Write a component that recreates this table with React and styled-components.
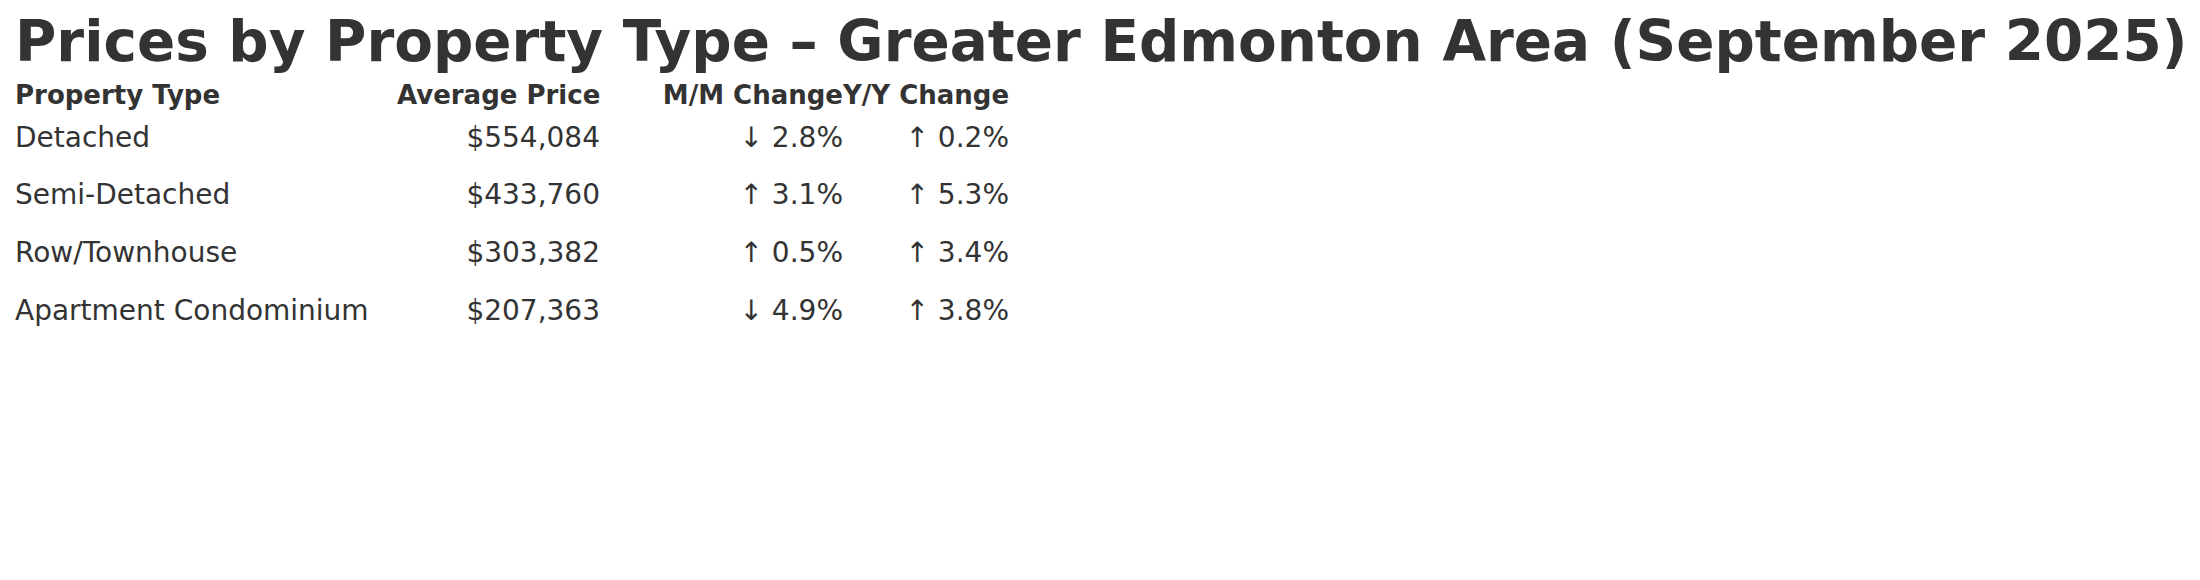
import React from "react";
import styled, { createGlobalStyle } from "styled-components";

const GlobalStyle = createGlobalStyle`
  body {
    margin: 0;
    background: #fff;
    font-family: "DejaVu Sans", sans-serif;
    color: #333;
  }
`;

const Page = styled.div`
  padding: 8px 15px;
`;

const Title = styled.h1`
  margin: 0 0 4px;
  font-size: 56.4px;
  font-weight: bold;
  line-height: 1.2;
  white-space: nowrap;
`;

const Table = styled.div`
  display: grid;
  grid-template-columns: 382px 203px 243px 166px;
  align-items: baseline;
`;

const HeadCell = styled.div`
  font-size: 26px;
  font-weight: bold;
  white-space: nowrap;
  text-align: ${(p) => (p.$left ? "left" : "right")};
  padding-bottom: 5px;
`;

const Cell = styled.div`
  font-size: 28px;
  white-space: nowrap;
  text-align: ${(p) => (p.$left ? "left" : "right")};
  padding: 6px 0 18.7px;
`;

const rows = [
  ["Detached", "$554,084", "↓ 2.8%", "↑ 0.2%"],
  ["Semi-Detached", "$433,760", "↑ 3.1%", "↑ 5.3%"],
  ["Row/Townhouse", "$303,382", "↑ 0.5%", "↑ 3.4%"],
  ["Apartment Condominium", "$207,363", "↓ 4.9%", "↑ 3.8%"],
];

export default function App() {
  return (
    <Page>
      <GlobalStyle />
      <Title>Prices by Property Type – Greater Edmonton Area (September 2025)</Title>
      <Table>
        <HeadCell $left>Property Type</HeadCell>
        <HeadCell>Average Price</HeadCell>
        <HeadCell>M/M Change</HeadCell>
        <HeadCell>Y/Y Change</HeadCell>
        {rows.map((r) =>
          r.map((v, i) => (
            <Cell key={r[0] + i} $left={i === 0}>
              {v}
            </Cell>
          ))
        )}
      </Table>
    </Page>
  );
}
